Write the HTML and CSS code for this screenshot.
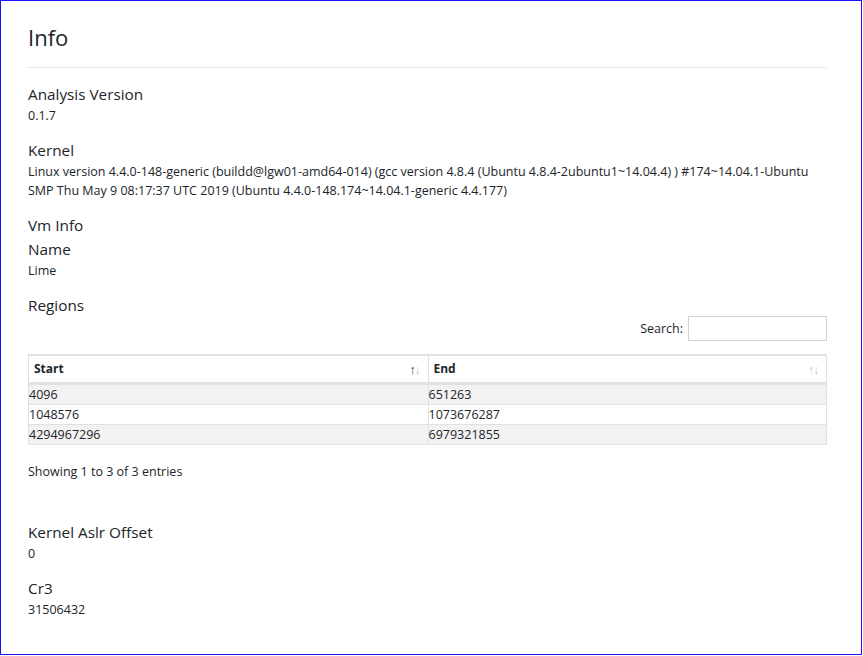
FILE: index.html
```html
<!DOCTYPE html>
<html lang="en">
<head>
<meta charset="utf-8">
<title>Info</title>
<link rel="stylesheet" href="styles.css">
</head>
<body>
<div class="frame">
  <div class="page">
    <h1 class="title">Info</h1>
    <hr class="rule">

    <section class="field">
      <h5 class="label">Analysis Version</h5>
      <div class="value">0.1.7</div>
    </section>

    <section class="field">
      <h5 class="label">Kernel</h5>
      <div class="value">Linux version 4.4.0-148-generic (buildd@lgw01-amd64-014) (gcc version 4.8.4 (Ubuntu 4.8.4-2ubuntu1~14.04.4) ) #174~14.04.1-Ubuntu SMP Thu May 9 08:17:37 UTC 2019 (Ubuntu 4.4.0-148.174~14.04.1-generic 4.4.177)</div>
    </section>

    <section class="field">
      <h5 class="label">Vm Info</h5>
      <div class="nested">
        <section class="field">
          <h5 class="label">Name</h5>
          <div class="value">Lime</div>
        </section>
        <section class="field">
          <h5 class="label">Regions</h5>
          <div class="datatable">
            <div class="filter">
              <label class="filter-label">Search: <input class="filter-input" type="search"></label>
            </div>
            <table class="grid">
              <thead>
                <tr>
                  <th class="sort sort-asc">Start</th>
                  <th class="sort">End</th>
                </tr>
              </thead>
              <tbody>
                <tr><td>4096</td><td>651263</td></tr>
                <tr><td>1048576</td><td>1073676287</td></tr>
                <tr><td>4294967296</td><td>6979321855</td></tr>
              </tbody>
            </table>
            <div class="summary">Showing 1 to 3 of 3 entries</div>
          </div>
        </section>
      </div>
    </section>

    <section class="field">
      <h5 class="label">Kernel Aslr Offset</h5>
      <div class="value">0</div>
    </section>

    <section class="field">
      <h5 class="label">Cr3</h5>
      <div class="value">31506432</div>
    </section>
  </div>
</div>
</body>
</html>
```

FILE: styles.css
```css
html, body {
  margin: 0;
  padding: 0;
  background: #ffffff;
}

body {
  font-family: "Open Sans", "Noto Sans", "DejaVu Sans", sans-serif;
  font-size: 12.5px;
  line-height: 19px;
  color: #212529;
}

.frame {
  box-sizing: border-box;
  width: 862px;
  height: 655px;
  border: 1px solid #1414ff;
  overflow: hidden;
}

.page {
  padding: 21px 34px 0 27px;
}

.title {
  margin: 0;
  font-size: 22px;
  font-weight: 400;
  line-height: 30px;
}

.rule {
  margin: 15px 0 16px;
  border: 0;
  border-top: 1px solid #e5e5e5;
}

.field {
  margin-bottom: 15px;
}

.nested {
  margin-top: 4px;
}

.nested > .field:last-child {
  margin-bottom: 0;
}

.label {
  margin: 0;
  font-size: 15.3px;
  font-weight: 400;
  line-height: 20px;
}

.value {
  margin: 2px 0 0;
}

/* data table block */
.datatable {
  margin-top: 1px;
  margin-bottom: 41px;
}

.filter {
  display: flex;
  justify-content: flex-end;
  margin-bottom: 13px;
}

.filter-label {
  display: flex;
  align-items: center;
  gap: 5px;
  font-weight: 400;
}

.filter-input {
  box-sizing: border-box;
  width: 139px;
  height: 25px;
  margin: 0;
  padding: 2px 6px;
  border: 1px solid #ced4da;
  border-radius: 0;
  font: inherit;
  background: #fff;
}

.grid {
  width: 100%;
  border-collapse: separate;
  border-spacing: 0;
  border: 1px solid #dee2e6;
  table-layout: fixed;
}

.grid th,
.grid td {
  text-align: left;
  vertical-align: top;
}

.grid th {
  position: relative;
  padding: 4px 30px 4px 5px;
  border-top: 1px solid #dee2e6;
  border-bottom: 2px solid #dee2e6;
  font-size: 12px;
  font-weight: 700;
  line-height: 18px;
}

.grid th + th,
.grid td + td {
  border-left: 1px solid #dee2e6;
}

.grid td {
  padding: 0;
  border-top: 1px solid #dee2e6;
  line-height: 19px;
}

.grid tbody tr:nth-child(odd) td {
  background: #f2f2f2;
}

/* sort arrows drawn at the right of each header cell */
.sort::before,
.sort::after {
  position: absolute;
  bottom: 3px;
  font-family: "Liberation Sans", sans-serif;
  font-size: 12px;
  font-weight: 400;
  line-height: 18px;
  color: #212529;
  opacity: 0.3;
}

.sort::before {
  content: "\2191";
  right: 12px;
}

.sort::after {
  content: "\2193";
  right: 7px;
}

.sort-asc::before {
  opacity: 1;
}

.summary {
  padding-top: 17px;
}
```
